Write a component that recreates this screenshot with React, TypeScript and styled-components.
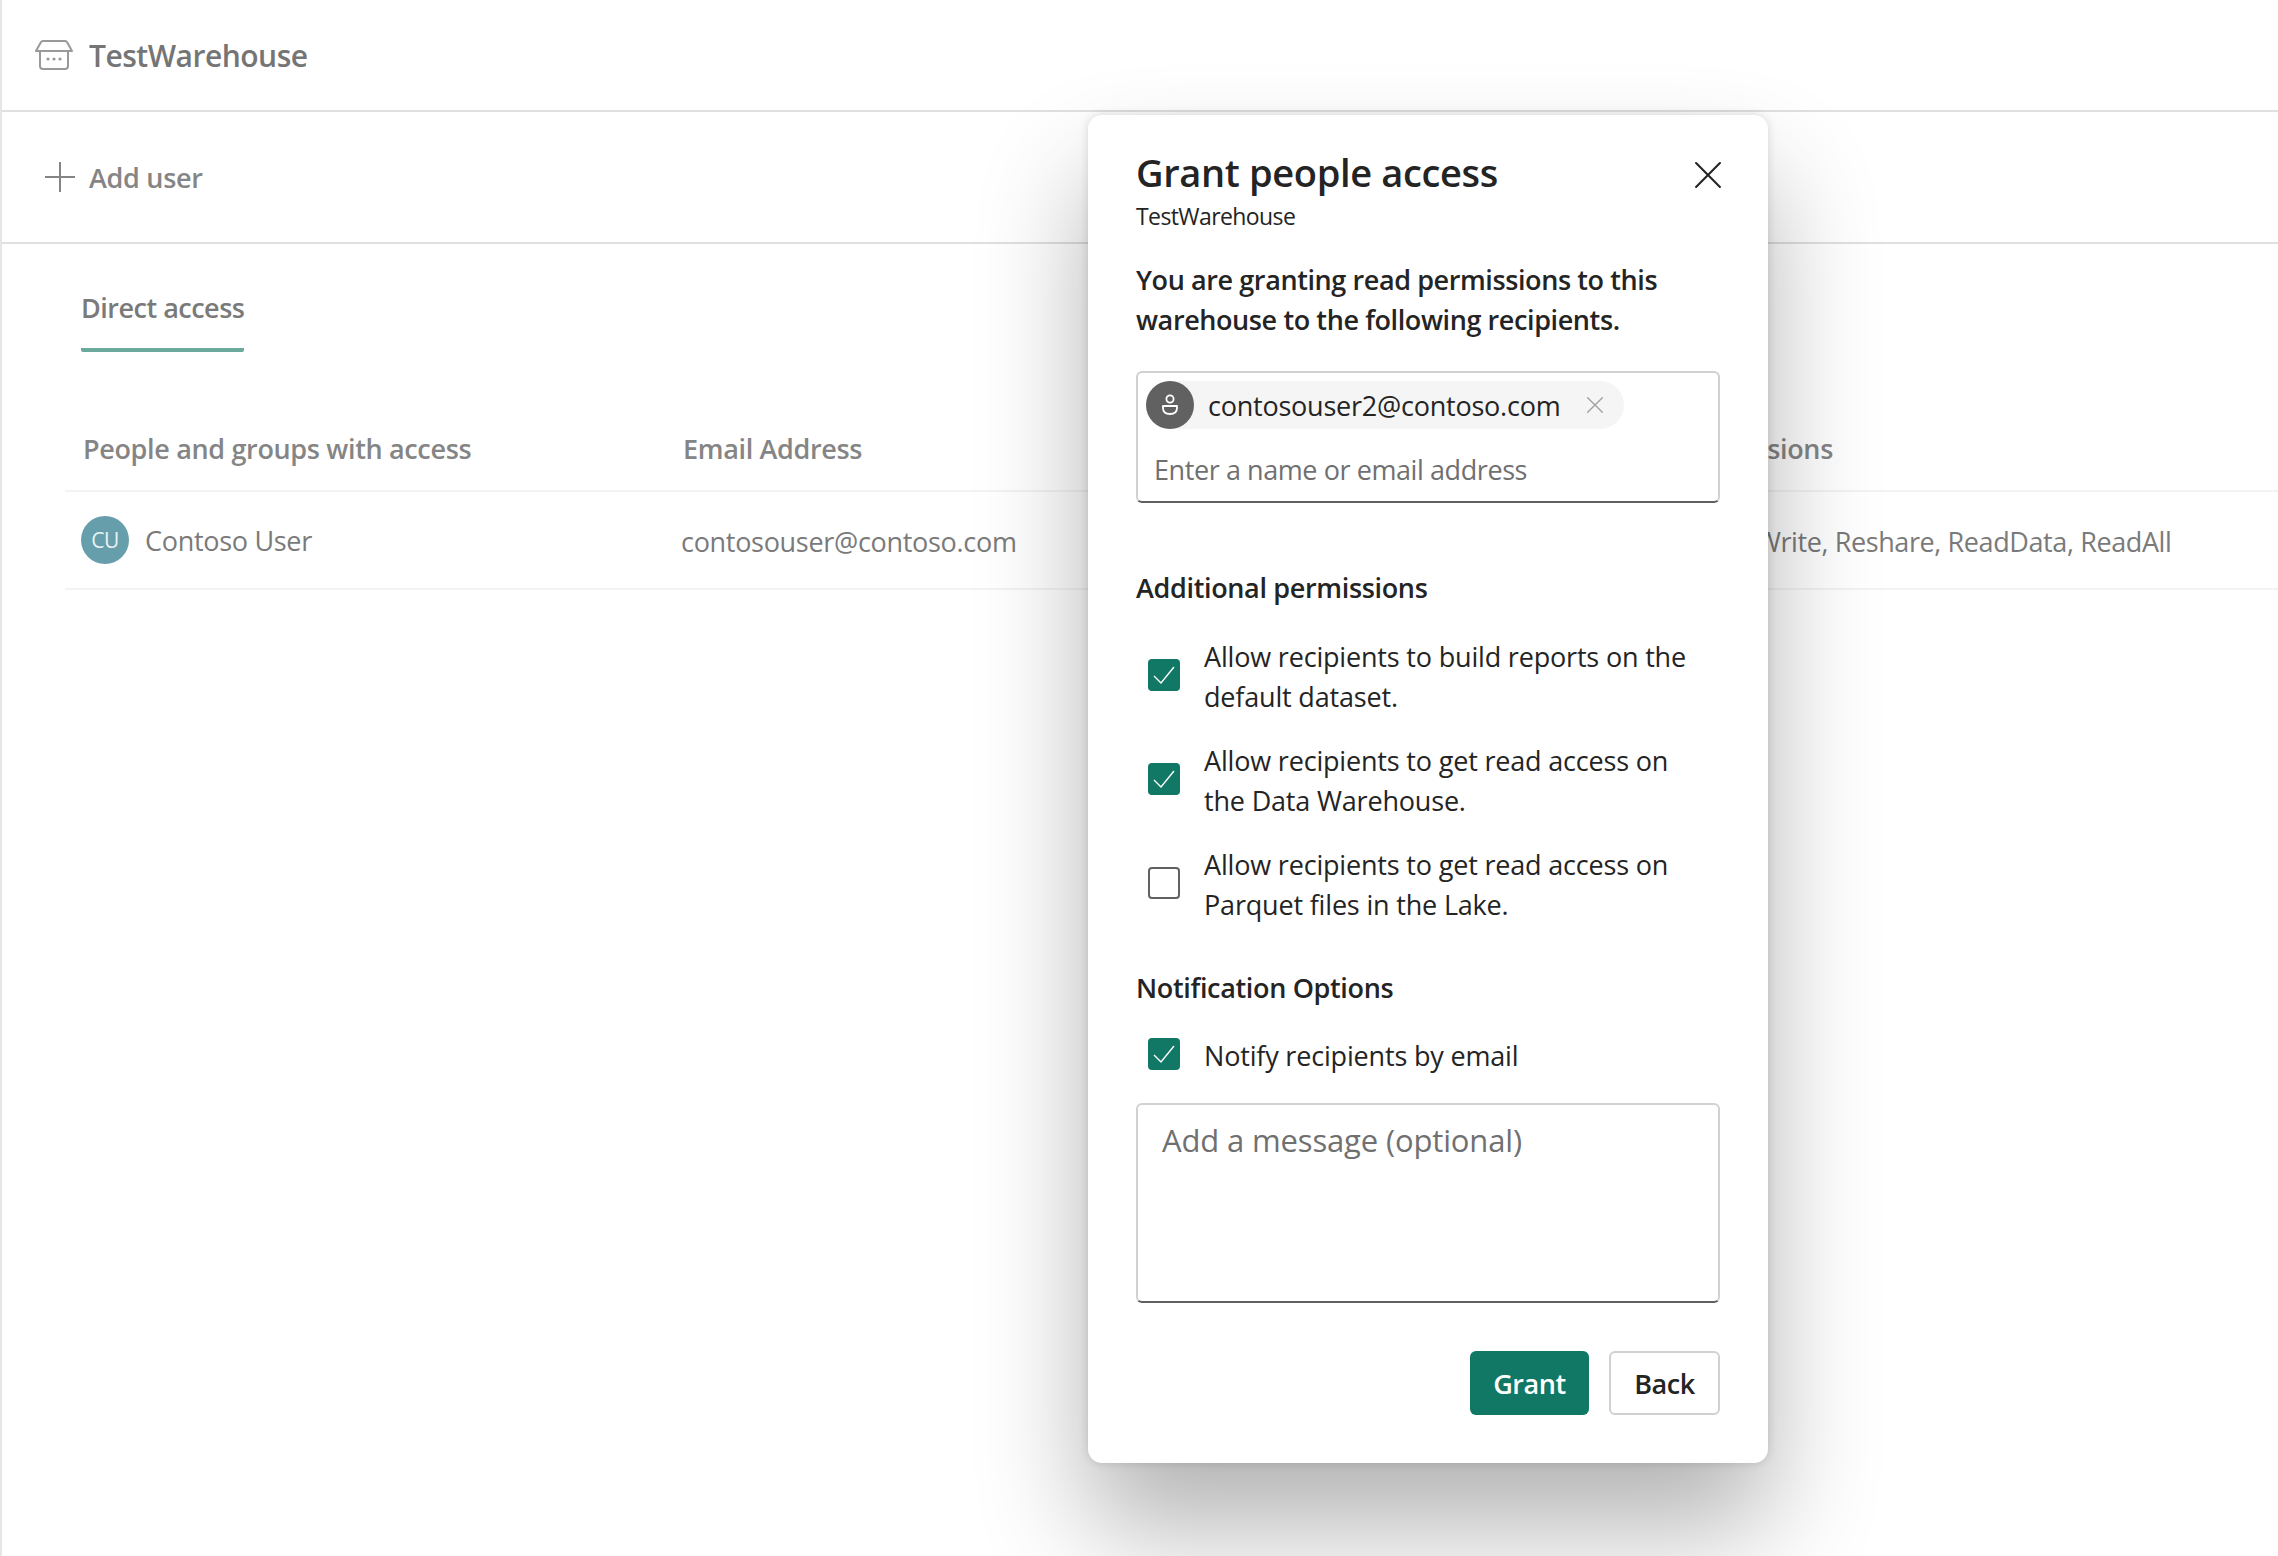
import styled, { createGlobalStyle } from "styled-components";

const GlobalStyle = createGlobalStyle`
  * { box-sizing: border-box; }
  body {
    margin: 0;
    background: #fff;
    font-family: "Open Sans", "Noto Sans", sans-serif;
    overflow: hidden;
  }
`;

function WarehouseIcon() {
  return (
    <svg width="38" height="30" viewBox="0 0 38 30" fill="none" stroke="#999" strokeWidth="2">
      <path d="M1 11 L6 2 Q6.5 1 8 1 H30 Q31.5 1 32 2 L37 11 Z" strokeLinejoin="round" />
      <path d="M5 11 V26 Q5 29 8 29 H30 Q33 29 33 26 V11" />
      <circle cx="13" cy="19" r="1.6" fill="#999" stroke="none" />
      <circle cx="19" cy="19" r="1.6" fill="#999" stroke="none" />
      <circle cx="25" cy="19" r="1.6" fill="#999" stroke="none" />
    </svg>
  );
}

function PlusIcon() {
  return (
    <svg width="30" height="30" viewBox="0 0 30 30" stroke="#858585" strokeWidth="2">
      <path d="M15 0 V30 M0 15 H30" />
    </svg>
  );
}

function CrossIcon({ size, color, width }: { size: number; color: string; width: number }) {
  return (
    <svg width={size} height={size} viewBox="0 0 24 24" stroke={color} strokeWidth={width} strokeLinecap="round">
      <path d="M1 1 L23 23 M23 1 L1 23" />
    </svg>
  );
}

function PersonIcon() {
  return (
    <svg width="18" height="22" viewBox="0 0 18 22" fill="none" stroke="#fff" strokeWidth="1.8">
      <circle cx="9" cy="5" r="3.6" />
      <path d="M2 12 H16 V14 Q16 20 9 20 Q2 20 2 14 Z" strokeLinejoin="round" />
    </svg>
  );
}

function Check({ checked }: { checked: boolean }) {
  return (
    <CheckBox $checked={checked}>
      {checked && (
        <svg width="24" height="20" viewBox="0 0 24 20" fill="none" stroke="#fff" strokeWidth="1.4">
          <path d="M2 11 L9 18 L22 2" />
        </svg>
      )}
    </CheckBox>
  );
}

export default function App() {
  return (
    <>
      <GlobalStyle />
      <Page>
        <Header>
          <WarehouseIcon />
          <HeaderTitle>TestWarehouse</HeaderTitle>
        </Header>
        <Toolbar>
          <PlusIcon />
          <ToolbarLabel>Add user</ToolbarLabel>
        </Toolbar>
        <Tabs>
          <Tab>Direct access</Tab>
        </Tabs>
        <Table>
          <TableHead>
            <HeadCell>People and groups with access</HeadCell>
            <HeadCell>Email Address</HeadCell>
            <HeadCell>Permissions</HeadCell>
          </TableHead>
          <TableRow>
            <UserCell>
              <Avatar>CU</Avatar>
              <span>Contoso User</span>
            </UserCell>
            <Cell>contosouser@contoso.com</Cell>
            <PermissionCell>Read, Write, Reshare, ReadData, ReadAll</PermissionCell>
          </TableRow>
        </Table>
      </Page>

      <Modal>
        <CloseButton>
          <CrossIcon size={26} color="#242424" width={1.9} />
        </CloseButton>
        <Title>Grant people access</Title>
        <Subtitle>TestWarehouse</Subtitle>
        <Intro>
          You are granting read permissions to this warehouse to the following recipients.
        </Intro>
        <PeopleBox>
          <Chip>
            <ChipAvatar>
              <PersonIcon />
            </ChipAvatar>
            <ChipText>contosouser2@contoso.com</ChipText>
            <CrossIcon size={16} color="#a0a0a0" width={2} />
          </Chip>
          <PeoplePlaceholder>Enter a name or email address</PeoplePlaceholder>
        </PeopleBox>

        <SectionHeading $top={65}>Additional permissions</SectionHeading>
        <Options>
          <Option>
            <Check checked />
            <OptionText>Allow recipients to build reports on the default dataset.</OptionText>
          </Option>
          <Option>
            <Check checked />
            <OptionText>Allow recipients to get read access on the Data Warehouse.</OptionText>
          </Option>
          <Option>
            <Check checked={false} />
            <OptionText>Allow recipients to get read access on Parquet files in the Lake.</OptionText>
          </Option>
        </Options>

        <SectionHeading $top={43}>Notification Options</SectionHeading>
        <NotifyRow>
          <Check checked />
          <OptionText>Notify recipients by email</OptionText>
        </NotifyRow>
        <MessageBox>Add a message (optional)</MessageBox>

        <Footer>
          <PrimaryButton>Grant</PrimaryButton>
          <SecondaryButton>Back</SecondaryButton>
        </Footer>
      </Modal>
    </>
  );
}

const Page = styled.div`
  height: 1556px;
  border-left: 2px solid #e6e6e6;
  overflow: hidden;
`;

const Header = styled.div`
  display: flex;
  align-items: center;
  gap: 16px;
  height: 112px;
  padding: 0 0 0 33px;
  border-bottom: 2px solid #e0e0e0;
`;

const HeaderTitle = styled.div`
  font-size: 30px;
  font-weight: 600;
  letter-spacing: -0.5px;
  color: #757575;
`;

const Toolbar = styled.div`
  display: flex;
  align-items: center;
  gap: 14px;
  height: 132px;
  padding-left: 43px;
  border-bottom: 2px solid #e0e0e0;
`;

const ToolbarLabel = styled.div`
  font-size: 27px;
  font-weight: 600;
  letter-spacing: -0.3px;
  color: #858585;
`;

const Tabs = styled.div`
  display: flex;
  padding: 44px 0 0 79px;
`;

const Tab = styled.div`
  padding-bottom: 20px;
  font-size: 27px;
  font-weight: 600;
  line-height: 40px;
  letter-spacing: -0.5px;
  color: #7a7a7a;
  border-bottom: 4px solid #6aa99b;
  border-radius: 2px;
`;

const Table = styled.div`
  margin: 58px 0 0 63px;
`;

const TableHead = styled.div`
  display: grid;
  grid-template-columns: 600px 996px 1fr;
  height: 82px;
  padding-bottom: 3px;
  align-items: center;
  border-bottom: 2px solid #f3f3f3;
`;

const HeadCell = styled.div`
  padding: 0 18px;
  font-size: 27px;
  font-weight: 600;
  letter-spacing: -0.34px;
  color: #858585;
`;

const TableRow = styled.div`
  display: grid;
  grid-template-columns: 600px 1000px 1fr;
  height: 98px;
  align-items: center;
  border-bottom: 2px solid #f3f3f3;
`;

const Cell = styled.div`
  padding: 2px 16px 0;
  font-size: 27px;
  letter-spacing: -0.3px;
  color: #7a7a7a;
`;

const PermissionCell = styled(Cell)`
  letter-spacing: -0.4px;
`;

const UserCell = styled(Cell)`
  display: flex;
  align-items: center;
  gap: 16px;
  padding-top: 0;
`;

const Avatar = styled.div`
  display: flex;
  align-items: center;
  justify-content: center;
  width: 48px;
  height: 48px;
  border-radius: 50%;
  background: #669eab;
  color: #e8f2f3;
  font-size: 21px;
  letter-spacing: -0.5px;
`;

const Modal = styled.div`
  position: absolute;
  top: 115px;
  left: 1088px;
  width: 680px;
  height: 1348px;
  padding: 29px 48px 0;
  background: #fff;
  border-radius: 14px;
  box-shadow: 0 64px 110px rgba(0, 0, 0, 0.3), 0 0 10px rgba(0, 0, 0, 0.14);
`;

const CloseButton = styled.div`
  position: absolute;
  top: 47px;
  right: 47px;
  display: flex;
`;

const Title = styled.div`
  font-size: 38px;
  font-weight: 600;
  line-height: 56px;
  letter-spacing: -0.35px;
  color: #242424;
`;

const Subtitle = styled.div`
  font-size: 23px;
  line-height: 32px;
  letter-spacing: -0.6px;
  color: #242424;
`;

const Intro = styled.div`
  margin-top: 28px;
  font-size: 27px;
  font-weight: 600;
  line-height: 40px;
  letter-spacing: -0.4px;
  color: #242424;
`;

const PeopleBox = styled.div`
  height: 132px;
  margin-top: 31px;
  padding: 8px 8px 0;
  border: 2px solid #d1d1d1;
  border-bottom-color: #616161;
  border-radius: 6px;
`;

const Chip = styled.div`
  display: flex;
  align-items: center;
  width: 478px;
  height: 48px;
  background: #f5f5f5;
  border-radius: 24px;
`;

const ChipAvatar = styled.div`
  display: flex;
  align-items: center;
  justify-content: center;
  width: 48px;
  height: 48px;
  border-radius: 50%;
  background: #616161;
`;

const ChipText = styled.div`
  width: 393px;
  padding-left: 14px;
  font-size: 27px;
  letter-spacing: -0.23px;
  color: #242424;
`;

const PeoplePlaceholder = styled.div`
  margin-top: 21px;
  padding-left: 8px;
  font-size: 27px;
  line-height: 40px;
  letter-spacing: -0.42px;
  color: #707070;
`;

const SectionHeading = styled.div<{ $top: number }>`
  margin-top: ${(p) => p.$top}px;
  font-size: 27px;
  font-weight: 600;
  line-height: 40px;
  letter-spacing: -0.34px;
  color: #242424;
`;

const Options = styled.div`
  display: flex;
  flex-direction: column;
  gap: 24px;
  margin-top: 29px;
`;

const Option = styled.div`
  display: flex;
  align-items: center;
  gap: 24px;
  padding-left: 12px;
`;

const NotifyRow = styled(Option)`
  margin-top: 28px;
`;

const CheckBox = styled.div<{ $checked: boolean }>`
  flex: none;
  display: flex;
  align-items: center;
  justify-content: center;
  width: 32px;
  height: 32px;
  margin-bottom: 4px;
  border-radius: 4px;
  border: 2px solid ${(p) => (p.$checked ? "#117865" : "#616161")};
  background: ${(p) => (p.$checked ? "#117865" : "#fff")};
`;

const OptionText = styled.div`
  max-width: 490px;
  font-size: 27px;
  line-height: 40px;
  letter-spacing: -0.18px;
  color: #242424;
`;

const MessageBox = styled.div`
  height: 200px;
  margin-top: 27px;
  padding: 13px 24px;
  border: 2px solid #d1d1d1;
  border-bottom-color: #616161;
  border-radius: 6px;
  font-size: 31px;
  line-height: 44px;
  letter-spacing: -0.15px;
  color: #707070;
`;

const Footer = styled.div`
  display: flex;
  justify-content: flex-end;
  gap: 20px;
  margin-top: 48px;
`;

const PrimaryButton = styled.div`
  display: flex;
  align-items: center;
  justify-content: center;
  width: 119px;
  height: 64px;
  border-radius: 6px;
  background: #117865;
  color: #fff;
  font-size: 27px;
  font-weight: 600;
  letter-spacing: -0.4px;
`;

const SecondaryButton = styled(PrimaryButton)`
  width: 111px;
  background: #fff;
  color: #242424;
  border: 2px solid #d1d1d1;
`;
